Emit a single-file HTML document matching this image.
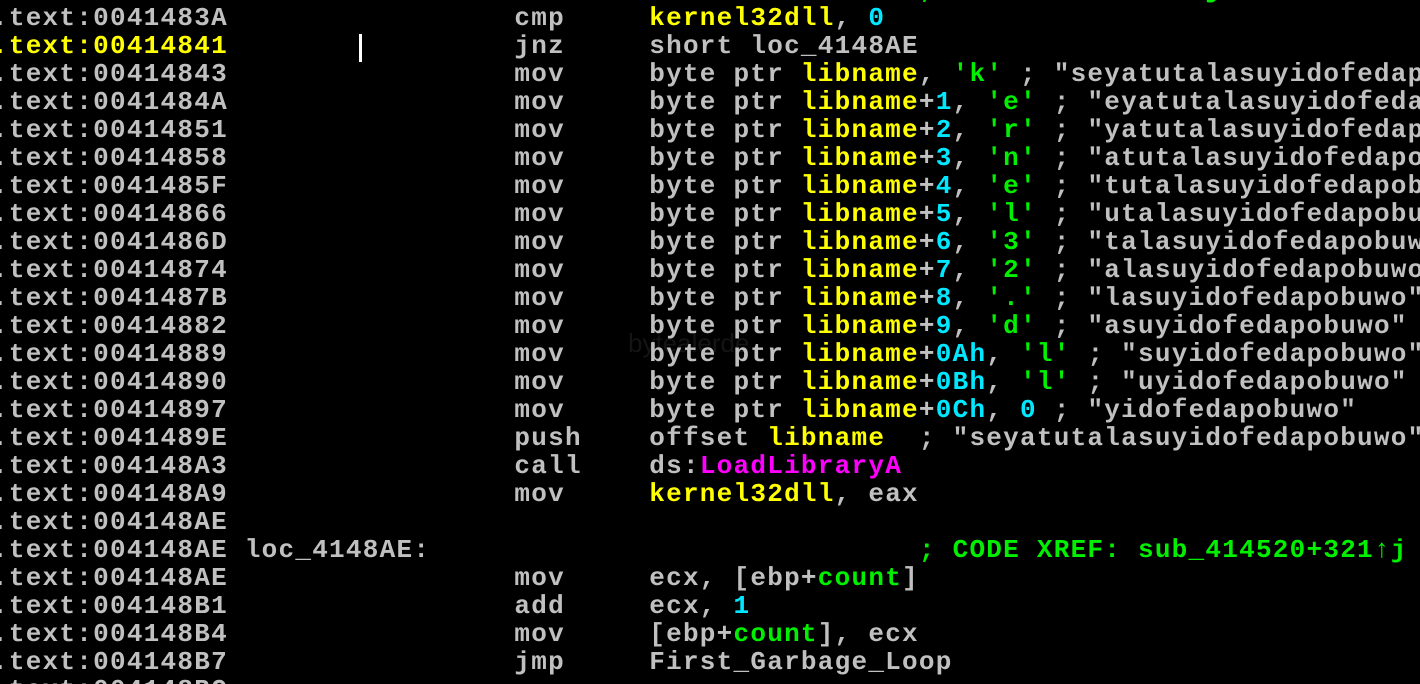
<!DOCTYPE html>
<html><head><meta charset="utf-8"><style>
html,body{margin:0;padding:0;background:#000;width:1420px;height:684px;overflow:hidden;position:relative}
#wrap{position:absolute;left:0;top:0;width:1420px;height:684px;overflow:hidden}
pre{position:absolute;left:-8px;top:-24px;margin:0;font-family:"Liberation Mono","DejaVu Sans Mono",monospace;font-weight:bold;font-size:26px;letter-spacing:1.25px;line-height:28px;color:#c0c0c0;white-space:pre}
.y{color:#ffff00}.g{color:#00f000}.c{color:#00e8ff}.m{color:#ff00ff}
#cur{position:absolute;left:359px;top:34px;width:3px;height:28px;background:#fff}
#wm{position:absolute;left:628px;top:328px;font-family:"Liberation Sans",sans-serif;font-size:26px;color:#141414}
</style></head><body><div id="wrap">
<div id="wm">bytealerde</div>
<pre><span class="g">                                                       ; sub_414520+316↑j</span>
.text:0041483A                 cmp     <span class="y">kernel32dll</span>, <span class="c">0</span>
<span class="y">.text:00414841</span>                 jnz     short loc_4148AE
.text:00414843                 mov     byte ptr <span class="y">libname</span>, <span class="g">'k'</span> ; "seyatutalasuyidofedapobuwo"
.text:0041484A                 mov     byte ptr <span class="y">libname</span>+<span class="c">1</span>, <span class="g">'e'</span> ; "eyatutalasuyidofedapobuwo"
.text:00414851                 mov     byte ptr <span class="y">libname</span>+<span class="c">2</span>, <span class="g">'r'</span> ; "yatutalasuyidofedapobuwo"
.text:00414858                 mov     byte ptr <span class="y">libname</span>+<span class="c">3</span>, <span class="g">'n'</span> ; "atutalasuyidofedapobuwo"
.text:0041485F                 mov     byte ptr <span class="y">libname</span>+<span class="c">4</span>, <span class="g">'e'</span> ; "tutalasuyidofedapobuwo"
.text:00414866                 mov     byte ptr <span class="y">libname</span>+<span class="c">5</span>, <span class="g">'l'</span> ; "utalasuyidofedapobuwo"
.text:0041486D                 mov     byte ptr <span class="y">libname</span>+<span class="c">6</span>, <span class="g">'3'</span> ; "talasuyidofedapobuwo"
.text:00414874                 mov     byte ptr <span class="y">libname</span>+<span class="c">7</span>, <span class="g">'2'</span> ; "alasuyidofedapobuwo"
.text:0041487B                 mov     byte ptr <span class="y">libname</span>+<span class="c">8</span>, <span class="g">'.'</span> ; "lasuyidofedapobuwo"
.text:00414882                 mov     byte ptr <span class="y">libname</span>+<span class="c">9</span>, <span class="g">'d'</span> ; "asuyidofedapobuwo"
.text:00414889                 mov     byte ptr <span class="y">libname</span>+<span class="c">0Ah</span>, <span class="g">'l'</span> ; "suyidofedapobuwo"
.text:00414890                 mov     byte ptr <span class="y">libname</span>+<span class="c">0Bh</span>, <span class="g">'l'</span> ; "uyidofedapobuwo"
.text:00414897                 mov     byte ptr <span class="y">libname</span>+<span class="c">0Ch</span>, <span class="c">0</span> ; "yidofedapobuwo"
.text:0041489E                 push    offset <span class="y">libname</span>  ; "seyatutalasuyidofedapobuwo"
.text:004148A3                 call    ds:<span class="m">LoadLibraryA</span>
.text:004148A9                 mov     <span class="y">kernel32dll</span>, eax
.text:004148AE
.text:004148AE loc_4148AE:                             <span class="g">; CODE XREF: sub_414520+321↑j</span>
.text:004148AE                 mov     ecx, [ebp+<span class="g">count</span>]
.text:004148B1                 add     ecx, <span class="c">1</span>
.text:004148B4                 mov     [ebp+<span class="g">count</span>], ecx
.text:004148B7                 jmp     First_Garbage_Loop
.text:004148BC
</pre>
<div id="cur"></div>
</div></body></html>
